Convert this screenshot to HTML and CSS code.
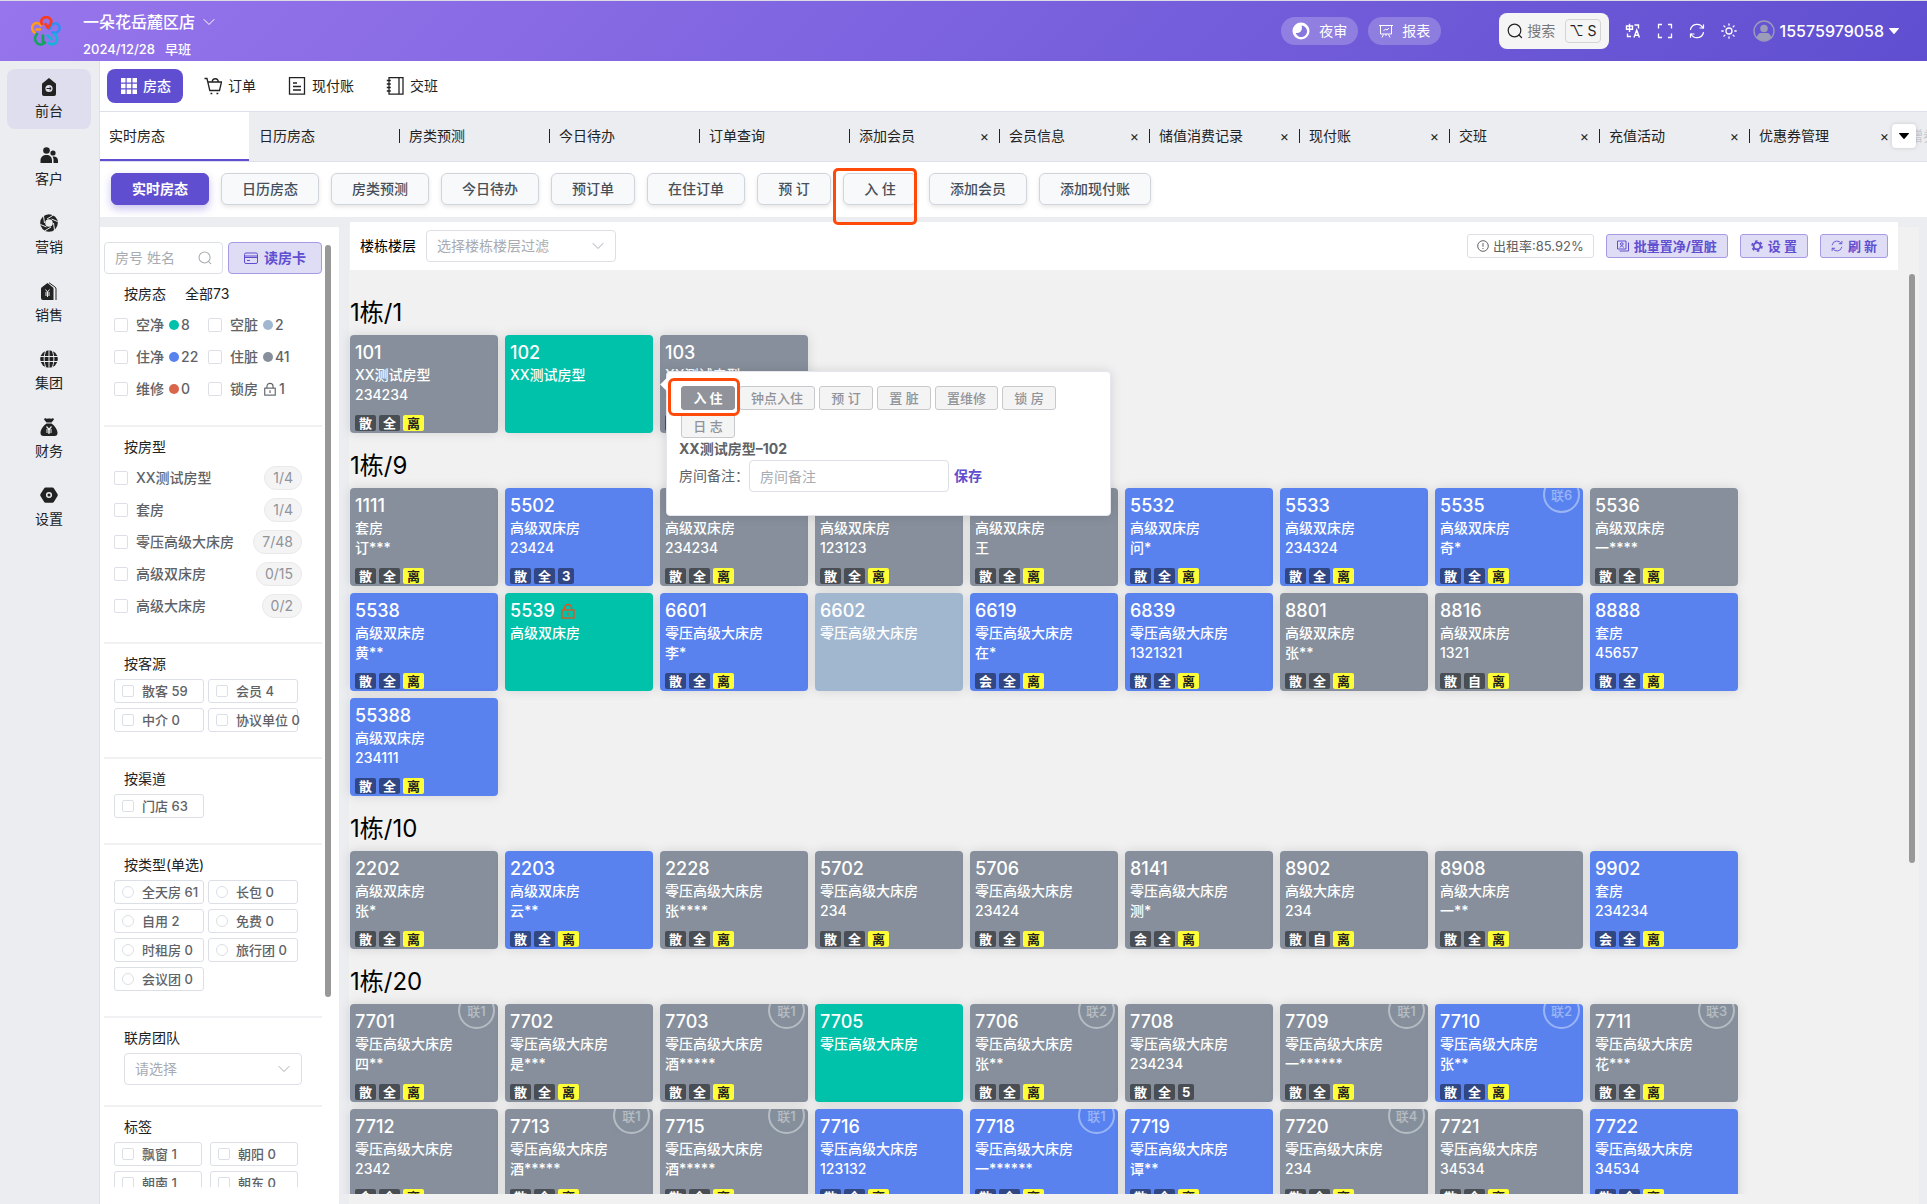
FILE: index.html
```html
<!DOCTYPE html>
<html lang="zh-CN">
<head>
<meta charset="utf-8">
<meta name="viewport" content="width=device-width, initial-scale=1">
<title>实时房态</title>
<link rel="stylesheet" href="styles.css">
</head>
<body>
<svg class="sprite" aria-hidden="true">
  <symbol id="chevron" viewBox="0 0 12 8"><path d="M1 1.5l5 5 5-5" fill="none" stroke="currentColor" stroke-linecap="round" stroke-linejoin="round"/></symbol>
  <symbol id="caret" viewBox="0 0 10 6"><path d="M.5 0h9c.5 0 .6.4.3.7L5.5 5.7a.7.7 0 0 1-1 0L.2.7C-.1.4 0 0 .5 0z" fill="currentColor"/></symbol>
  <symbol id="search" viewBox="0 0 16 16"><g fill="none" stroke="currentColor" stroke-width="1.200" stroke-linecap="round"><circle cx="7.5" cy="7.5" r="6.300"/><path d="M12 12l2.500 2.500"/></g></symbol>
  <symbol id="lock" viewBox="0 0 14 16"><g fill="none" stroke="currentColor" stroke-width="1.300"><rect x="1" y="7" width="12" height="8"/><path d="M3.500 7V5a3.500 3.500 0 0 1 7 0v2M7 9.500v3"/></g></symbol>
  <symbol id="refresh" viewBox="0 0 16 16"><g fill="none" stroke="currentColor" stroke-width="1.200" stroke-linecap="round" stroke-linejoin="round"><path d="M1.500 6.500A6.700 6.700 0 0 1 14 5M14.500 9.500A6.700 6.700 0 0 1 2 11"/><path d="M14.500 1.800V5H11M1.500 14.200V11H5"/></g></symbol>
</svg>

<header class="topbar">
  <svg class="logo" viewBox="0 0 30 30" fill="none" stroke-width="2.600" stroke-linecap="round" stroke-linejoin="round">
    <path stroke="#2f8ff5" d="M18.500 13l2-3.500c1.500-2 4-2.800 6-1.500 2.700 1.700 2.800 5.500.5 7.500-1.500 1.200-3.500 1.500-5.500 1"/>
    <path stroke="#12b5d6" d="M23.500 18c2.500 2.500 3.500 5.500 1.500 8.300-2 2.400-5.500 2.700-7.500.5M16.500 19.500c1 2.500 4 1.500 4 4"/>
    <path stroke="#10a558" d="M12 19.500V26M6 18c-2.500 2.500-2.500 6-.5 8.500 2.500 3 6.500 2.500 8.500 0"/>
    <path stroke="#ff9c1a" d="M3.500 16.500C.5 14 .5 10 3 8c2.500-1.700 5.500-1 7 1.500M9 13.500H5.500"/>
    <path stroke="#fb3b1e" d="M17 12l2.500-4c1.200-2 .8-4.200-.8-5.500-2-1.600-5-1.600-7 0-1.600 1.400-1.800 3.500-.7 5.500M17 12l-2.500-4"/>
  </svg>
  <div class="shop">
    <button class="shop-name" type="button">一朵花岳麓区店 <svg class="chev"><use href="#chevron"/></svg></button>
    <div class="shop-date"><span>2024/12/28</span><span>早班</span></div>
  </div>
  <div class="top-actions">
    <button class="pill" type="button"><svg class="i18" viewBox="0 0 18 18"><circle cx="9" cy="9" r="8.500" fill="#fff"/><path d="M9.500 3.500a5.800 5.800 0 1 1-5.800 7.500c3.800.8 7.500-2.500 5.800-7.500z" fill="#8577de"/></svg>夜审</button>
    <button class="pill" type="button"><svg class="i14" viewBox="0 0 14 14" fill="none" stroke="#fff"><path d="M0 1.500h14M1.500 1.500v8.500h11V1.500M4.500 7l2-2 1.500 1L10 4M4.500 10.500L3 13.500M9.500 10.500l1.500 3M7 10v2"/></svg>报表</button>
    <button class="search-box" type="button"><svg class="i16"><use href="#search"/></svg><span>搜索</span><kbd>⌥ S</kbd></button>
    <div class="tools">
      <button type="button" aria-label="语言"><svg class="i16" viewBox="0 0 16 16" fill="none" stroke="currentColor" stroke-width="1.400"><path d="M1.500 3h6v3.300h-6zM4.500.8V9M9.500 2h4v3.500M2.500 10.500v3H6M9 14.500l2.700-7.500 2.700 7.500M9.800 12.300h3.800"/></svg></button>
      <button type="button" aria-label="全屏"><svg class="i16" viewBox="0 0 16 16" fill="none" stroke="currentColor" stroke-width="1.300"><path d="M1.500 5.500v-4H5M11 1.500h3.500v4M14.500 10.500v4H11M5 14.500H1.500v-4"/></svg></button>
      <button type="button" aria-label="刷新页面"><svg class="i16"><use href="#refresh"/></svg></button>
      <button type="button" aria-label="主题"><svg class="i16" viewBox="0 0 16 16" fill="none" stroke="currentColor" stroke-width="1.300" stroke-linecap="round"><circle cx="8" cy="8" r="3"/><path d="M8 .8v1.400M8 13.800v1.400M.8 8h1.400M13.800 8h1.400M2.900 2.900l1 1M12.100 12.100l1 1M2.900 13.100l1-1M12.100 3.900l1-1"/></svg></button>
    </div>
    <button class="user" type="button"><svg class="avatar" viewBox="0 0 22 22"><circle cx="11" cy="11" r="10" fill="none" stroke="#9a9cb8" stroke-width="1.400"/><circle cx="11" cy="8.500" r="3.800" fill="#9a9cb8"/><path d="M4 18c0-3.500 2-5 4-5h6c2 0 4 1.500 4 5a10 10 0 0 1-14 0z" fill="#9a9cb8"/></svg>15575979058<svg class="caret"><use href="#caret"/></svg></button>
  </div>
</header>

<div class="shell">
  <nav class="sidebar" aria-label="主菜单">
    <a class="side-item active" href="#"><svg viewBox="0 0 18 18"><path d="M9 0l6.500 5.200c.5.4.5.800.5 1.300V16a2 2 0 0 1-2 2H4a2 2 0 0 1-2-2V6.500c0-.5 0-.9.5-1.300z" fill="#222"/><circle cx="9" cy="10.500" r="3.600" fill="#e0e0ee"/><path d="M6.500 10.500h4.500M9.500 9l1.700 1.500L9.500 12" stroke="#222" fill="none"/></svg>前台</a>
    <a class="side-item" href="#"><svg viewBox="0 0 18 18" fill="#222"><circle cx="6.500" cy="4.500" r="3.300"/><circle cx="13" cy="7" r="2.600"/><path d="M.5 17v-2.500C.5 11 3 9 6.500 9c3.300 0 5.500 2 5.500 5.500V17zM13.500 17v-3c0-1.500-.4-2.500-1-3.500 3-.5 5.500 1 5.500 4V17z"/></svg>客户</a>
    <a class="side-item" href="#"><svg viewBox="0 0 18 18"><circle cx="9" cy="9" r="6.300" fill="none" stroke="#222" stroke-width="5"/><path d="M7 5L13.500 1M11.500 5L17.500 7.500M13.500 9L14.500 16M11 13L4.500 17M6.500 13L.5 10.500M4.500 9L3.500 2" stroke="#ecedf1" fill="none"/></svg>营销</a>
    <a class="side-item" href="#"><svg viewBox="0 0 18 18"><path d="M7.500 1l5.500 4.500c.5.4.5 1 .5 1.500V18H3a2 2 0 0 1-2-2V7c0-.5 0-1 .5-1.500z" fill="#222"/><path d="M9 .7l6 4.300c.8.6 1 1 1 2v11" fill="none" stroke="#222"/><path d="M5.500 7.500l2 2.500 2-2.500M5 11h5M5 13h5M7.500 10v5" stroke="#ecedf1" fill="none"/></svg>销售</a>
    <a class="side-item" href="#"><svg viewBox="0 0 18 18"><circle cx="9" cy="9" r="8.800" fill="#222"/><path d="M0 6.500h18M0 11.500h18M9 0v18M6 .5c-2.500 5-2.500 12 0 17M12 .5c2.500 5 2.500 12 0 17" stroke="#ecedf1" fill="none"/></svg>集团</a>
    <a class="side-item" href="#"><svg viewBox="0 0 18 18"><path d="M5 0c1.500 1 2.500.5 4 .5S12 1 13 0l1 1.500-2.500 3h-5L4 1.500zM6.500 5.500h5C15 8 17.500 12 17.500 15c0 2-1 3-3 3h-11c-2 0-3-1-3-3 0-3 2.500-7 6-9.500z" fill="#222"/><path d="M6.500 8.500L9 11.500l2.500-3M6 12h6M6 14h6M9 11.500V16" stroke="#ecedf1" stroke-width="1.200" fill="none"/></svg>财务</a>
    <a class="side-item" href="#"><svg viewBox="0 0 18 18"><path d="M5.500 1.500h7c.6 0 1 .2 1.300.7L17.500 8c.4.600.4 1.300 0 2l-3.700 6c-.3.500-.7.700-1.300.7h-7c-.6 0-1-.2-1.300-.7L.5 10c-.4-.7-.4-1.400 0-2l3.700-5.800c.3-.5.7-.7 1.300-.7z" fill="#222"/><circle cx="9" cy="9" r="2.300" fill="none" stroke="#ecedf1" stroke-width="1.500"/></svg>设置</a>
  </nav>

  <div class="workspace">
    <nav class="subnav" aria-label="前台">
      <a class="sub-item active" href="#"><svg class="i16" viewBox="0 0 16 16" fill="currentColor"><path d="M0 0h4.500v4.500H0zM5.700 0h4.500v4.500H5.700zM11.500 0H16v4.500h-4.500zM0 5.700h4.500v4.500H0zM5.700 5.700h4.500v4.500H5.700zM11.500 5.700H16v4.500h-4.500zM0 11.500h4.500V16H0zM5.700 11.500h4.500V16H5.700zM11.500 11.500H16V16h-4.500z"/></svg>房态</a>
      <a class="sub-item" href="#"><svg class="i18" viewBox="0 0 18 18" fill="none" stroke="currentColor" stroke-width="1.300"><path d="M.5 1.500H3l2.800 12h9.700L17.500 5H4M8 5.500c.5-5 6-5 6.500 0"/><path d="M6.500 16.500h1.800M12.500 16.500h1.800"/></svg>订单</a>
      <a class="sub-item" href="#"><svg class="i18" viewBox="0 0 18 18" fill="none" stroke="currentColor" stroke-width="1.300"><path d="M1.500.700h15v16.500h-15zM5 6h4M5 9.500h8M5 13h8"/></svg>现付账</a>
      <a class="sub-item" href="#"><svg class="i18" viewBox="0 0 18 18" fill="none" stroke="currentColor" stroke-width="1.300"><path d="M3 .7h14v16.500H3zM13 .7v16.500M.8 3.500h4M.8 7h4M.8 10.500h4M.8 14h4"/></svg>交班</a>
    </nav>

    <div class="tabs">
      <div class="tab active"><a href="#">实时房态</a></div>
      <div class="tab plain"><a href="#">日历房态</a></div>
      <div class="tab"><a href="#">房类预测</a></div>
      <div class="tab"><a href="#">今日待办</a></div>
      <div class="tab"><a href="#">订单查询</a></div>
      <div class="tab"><a href="#">添加会员</a><button type="button">×</button></div>
      <div class="tab"><a href="#">会员信息</a><button type="button">×</button></div>
      <div class="tab"><a href="#">储值消费记录</a><button type="button">×</button></div>
      <div class="tab"><a href="#">现付账</a><button type="button">×</button></div>
      <div class="tab"><a href="#">交班</a><button type="button">×</button></div>
      <div class="tab"><a href="#">充值活动</a><button type="button">×</button></div>
      <div class="tab"><a href="#">优惠券管理</a><button type="button">×</button></div>
      <div class="tab faded"><a href="#">赠券</a></div>
      <button class="tabs-more" type="button" aria-label="更多标签"><svg class="caret"><use href="#caret"/></svg></button>
    </div>

    <div class="quick">
      <button class="quick-btn active" type="button">实时房态</button>
      <button class="quick-btn" type="button">日历房态</button>
      <button class="quick-btn" type="button">房类预测</button>
      <button class="quick-btn" type="button">今日待办</button>
      <button class="quick-btn" type="button">预订单</button>
      <button class="quick-btn" type="button">在住订单</button>
      <button class="quick-btn" type="button">预 订</button>
      <span class="marked marked-quick"><button class="quick-btn" type="button">入 住</button></span>
      <button class="quick-btn" type="button">添加会员</button>
      <button class="quick-btn" type="button">添加现付账</button>
    </div>

    <main class="content">
      <aside class="filters">
        <div class="filter-scroll">
          <div class="find">
            <label class="find-box"><input type="text" placeholder="房号 姓名" aria-label="房号 姓名"><svg class="i14"><use href="#search"/></svg></label>
            <button class="btn-soft read-card" type="button"><svg class="i14" viewBox="0 0 14 14" fill="none" stroke="currentColor"><rect x=".5" y="2" width="13" height="10.500" rx="1.500"/><path d="M.5 5h13M.5 6.500h13M3 9.500h3"/></svg>读房卡</button>
          </div>
          <section class="filter first">
            <h3>按房态<span>全部73</span></h3>
            <div class="states">
              <label><input type="checkbox">空净<i class="dot green"></i>8</label>
              <label><input type="checkbox">空脏<i class="dot pale"></i>2</label>
              <label><input type="checkbox">住净<i class="dot blue"></i>22</label>
              <label><input type="checkbox">住脏<i class="dot gray"></i>41</label>
              <label><input type="checkbox">维修<i class="dot red"></i>0</label>
              <label><input type="checkbox">锁房<svg class="lock-sm"><use href="#lock"/></svg>1</label>
            </div>
          </section>
          <section class="filter">
            <h3>按房型</h3>
            <div class="types">
              <label><input type="checkbox">XX测试房型<span class="count">1/4</span></label>
              <label><input type="checkbox">套房<span class="count">1/4</span></label>
              <label><input type="checkbox">零压高级大床房<span class="count">7/48</span></label>
              <label><input type="checkbox">高级双床房<span class="count">0/15</span></label>
              <label><input type="checkbox">高级大床房<span class="count">0/2</span></label>
            </div>
          </section>
          <section class="filter">
            <h3>按客源</h3>
            <div class="boxes">
              <label><input type="checkbox">散客 59</label>
              <label><input type="checkbox">会员 4</label>
              <label><input type="checkbox">中介 0</label>
              <label><input type="checkbox">协议单位 0</label>
            </div>
          </section>
          <section class="filter">
            <h3>按渠道</h3>
            <div class="boxes"><label><input type="checkbox">门店 63</label></div>
          </section>
          <section class="filter">
            <h3>按类型(单选)</h3>
            <div class="boxes">
              <label><input type="radio" name="kind">全天房 61</label>
              <label><input type="radio" name="kind">长包 0</label>
              <label><input type="radio" name="kind">自用 2</label>
              <label><input type="radio" name="kind">免费 0</label>
              <label><input type="radio" name="kind">时租房 0</label>
              <label><input type="radio" name="kind">旅行团 0</label>
              <label><input type="radio" name="kind">会议团 0</label>
            </div>
          </section>
          <section class="filter">
            <h3><label for="team">联房团队</label></h3>
            <div class="select team"><select id="team"><option>请选择</option></select><svg class="chev"><use href="#chevron"/></svg></div>
          </section>
          <section class="filter">
            <h3>标签</h3>
            <div class="boxes wide">
              <label><input type="checkbox">飘窗 1</label>
              <label><input type="checkbox">朝阳 0</label>
              <label><input type="checkbox">朝南 1</label>
              <label><input type="checkbox">朝东 0</label>
            </div>
          </section>
        </div>
        <div class="thumb"></div>
      </aside>

      <section class="board">
        <div class="board-bar">
          <label for="floor">楼栋楼层</label>
          <div class="select floor"><select id="floor"><option>选择楼栋楼层过滤</option></select><svg class="chev"><use href="#chevron"/></svg></div>
          <div class="board-actions">
            <span class="rate"><svg class="i12" viewBox="0 0 12 12" fill="none" stroke="currentColor"><circle cx="6" cy="6" r="5.300"/><path d="M6 3v3.800M6 8v1"/></svg>出租率:85.92%</span>
            <button class="btn-soft" type="button"><svg class="i12" viewBox="0 0 12 12" fill="none" stroke="currentColor"><path d="M.5 1h8.500v8H.5zM11.500 2.500v8.500H2.500M3 7.500c0-2 3.500-2 3.500 0"/><circle cx="4.800" cy="4" r="1.300"/></svg>批量置净/置脏</button>
            <button class="btn-soft" type="button"><svg class="i12" viewBox="0 0 12 12" fill="none" stroke="currentColor"><circle cx="6" cy="6" r="3.400" stroke-width="1.800"/><circle cx="6" cy="6" r="5" stroke-width="1.600" stroke-dasharray="2.600 2.636"/></svg>设 置</button>
            <button class="btn-soft" type="button"><svg class="i12"><use href="#refresh"/></svg>刷 新</button>
          </div>
        </div>
        <div class="board-scroll" id="board"></div>
        <div class="thumb"></div>
      </section>
    </main>
  </div>
</div>

<template id="room-menu">
  <div class="popover">
    <div class="pop-actions">
      <span class="marked marked-pop"><button class="pop-btn active" type="button">入 住</button></span>
      <button class="pop-btn" type="button">钟点入住</button>
      <button class="pop-btn" type="button">预 订</button>
      <button class="pop-btn" type="button">置 脏</button>
      <button class="pop-btn" type="button">置维修</button>
      <button class="pop-btn" type="button">锁 房</button>
      <button class="pop-btn" type="button">日 志</button>
    </div>
    <div class="pop-title">XX测试房型–102</div>
    <div class="pop-note">
      <label for="note">房间备注：</label>
      <input id="note" type="text" placeholder="房间备注">
      <button type="button">保存</button>
    </div>
  </div>
</template>
<script src="app.js"></script>
</body>
</html>
```
FILE: styles.css
```css
* { box-sizing: border-box; }

html, body { height: 100%; }

body {
  margin: 0;
  display: flex;
  flex-direction: column;
  overflow: hidden;
  background: #ecedf1;
  color: #222;
  font: 14px/20px Inter, "Noto Sans CJK SC", sans-serif;
}

button, input, select { font: inherit; color: inherit; }
button { padding: 0; border: 0; background: none; white-space: nowrap; cursor: pointer; }
a { color: inherit; text-decoration: none; }
h2, h3 { margin: 0; font-weight: 400; }
svg { flex: none; display: block; }
input::placeholder { color: #a8abb2; opacity: 1; }

.sprite { position: absolute; width: 0; height: 0; }
.i12 { width: 12px; height: 12px; }
.i14 { width: 14px; height: 14px; }
.i16 { width: 16px; height: 16px; }
.i18 { width: 18px; height: 18px; }
.chev { width: 12px; height: 8px; }
.caret { width: 10px; height: 6px; }

/* top bar */
.topbar {
  flex: none;
  display: flex;
  align-items: center;
  height: 61px;
  padding: 0 28px 0 31px;
  border-top: 1px solid #dcdce4;
  background: linear-gradient(135deg, #9775ec, #5f4fd0);
  color: #fff;
}
.logo { width: 30px; height: 30px; }
.shop { display: flex; flex-direction: column; gap: 7px; margin-left: 22px; padding-top: 9px; }
.shop-name { display: flex; align-items: center; gap: 8px; font-size: 16px; font-weight: 500; }
.shop-date { display: flex; gap: 10px; font-size: 13px; font-weight: 500; }
.top-actions { display: flex; align-items: center; margin-left: auto; }
.pill {
  display: flex;
  align-items: center;
  gap: 9px;
  height: 28px;
  margin-right: 10px;
  padding: 0 11px;
  border-radius: 14px;
  background: rgba(255, 255, 255, .22);
}
.search-box {
  display: flex;
  align-items: center;
  height: 36px;
  margin: 0 16px 0 48px;
  padding: 0 8px;
  border-radius: 8px;
  background: #f5f5f5;
  color: #222;
}
.search-box span { margin: 0 10px 0 4px; color: #777; }
.search-box kbd {
  height: 24px;
  padding: 0 3px;
  border: 1px solid #d4d4d4;
  border-radius: 4px;
  font: 14px/22px Inter, "DejaVu Sans", sans-serif;
}
.tools { display: flex; gap: 16px; }
.user { display: flex; align-items: center; gap: 5px; margin-left: 16px; font-size: 16px; font-weight: 500; }
.avatar { width: 22px; height: 22px; }

/* side menu */
.shell { flex: 1; display: flex; min-height: 0; }
.sidebar {
  flex: none;
  display: flex;
  flex-direction: column;
  gap: 8px;
  width: 100px;
  padding: 8px 8px 0 7px;
  border-right: 1px solid #dfe0e8;
}
.side-item {
  display: flex;
  flex-direction: column;
  align-items: center;
  gap: 5px;
  height: 60px;
  padding-top: 9px;
  border-radius: 8px;
}
.side-item svg { width: 18px; height: 18px; }
.side-item.active { background: #dfdeee; }

.workspace { flex: 1; display: flex; flex-direction: column; min-width: 0; }
.subnav {
  flex: none;
  display: flex;
  gap: 10px;
  height: 51px;
  padding: 8px 7px;
  border-bottom: 1px solid #dde0ea;
  background: #fff;
}
.sub-item { display: flex; align-items: center; gap: 6px; height: 34px; padding: 0 11px; }
.sub-item.active { padding: 0 12px 0 14px; border-radius: 8px; background: #5f4fd0; color: #fff; font-weight: 500; }

/* opened pages */
.tabs {
  flex: none;
  display: flex;
  position: relative;
  height: 50px;
  border-bottom: 1px solid #dde0ea;
  overflow: hidden;
}
.tab {
  flex: none;
  display: flex;
  align-items: center;
  justify-content: space-between;
  width: 150px;
  padding: 0 10px 2px 0;
}
.tab::before { content: ""; width: 1px; height: 14px; margin-right: 9px; background: #222; }
.tab a { flex: 1; }
.tab.active { width: 149px; padding-bottom: 0; border-bottom: 2px solid #5f4fd0; background: #fff; }
.tab.active::before, .tab.plain::before { background: none; }
.tab.active::before { margin-right: 8px; }
.tab.faded { color: #c8c9ce; }
.tabs-more {
  position: absolute;
  top: 12px;
  right: 11px;
  display: grid;
  place-items: center;
  width: 24px;
  height: 24px;
  border-radius: 4px;
  background: #fff;
  box-shadow: 0 0 4px rgba(0, 0, 0, .15);
  color: #000;
}

/* shortcut buttons */
.quick { flex: none; display: flex; gap: 12px; height: 55px; padding: 11px; background: #fff; }
.quick-btn {
  min-width: 74px;
  height: 32px;
  padding: 0 20px;
  border: 1px solid #d0d5dc;
  border-radius: 6px;
  background: #f8f9fb;
  box-shadow: 0 2px 4px rgba(0, 0, 0, .1);
  color: #475059;
  font-weight: 500;
}
.quick-btn.active {
  border-color: #5f4fd0;
  background: #5f4fd0;
  box-shadow: 0 4px 8px rgba(95, 79, 208, .35);
  color: #fff;
  font-weight: 700;
}
.marked { position: relative; z-index: 1; }
.marked::after {
  content: "";
  position: absolute;
  border: 3px solid #ff4a0a;
  border-radius: 5px;
  pointer-events: none;
}
.marked-quick::after { inset: -5px 0 -19px -10px; }
.marked-pop::after { inset: -8px -5px -6px -13px; border-radius: 6px; }

/* filter column */
.content { flex: 1; display: flex; gap: 10px; min-height: 0; }
.filters {
  flex: none;
  position: relative;
  width: 239px;
  margin-top: 10px;
  padding: 15px 17px 17px 4px;
  background: #fff;
}
.filter-scroll { height: 100%; overflow: hidden; }
.thumb { position: absolute; width: 6px; border-radius: 3px; background: #989898; }
.filters .thumb { top: 18px; right: 8px; height: 77%; }
.find { display: flex; gap: 5px; height: 32px; margin-bottom: 5px; }
.find-box {
  flex: 1;
  display: flex;
  align-items: center;
  min-width: 0;
  padding: 0 10px;
  border: 1px solid #dcdfe6;
  border-radius: 4px;
  color: #a8abb2;
}
.find-box input { flex: 1; min-width: 0; padding: 0; border: 0; outline: 0; background: none; }
.btn-soft {
  display: flex;
  align-items: center;
  gap: 5px;
  height: 24px;
  padding: 0 10px;
  border: 1px solid #a59ae6;
  border-radius: 3px;
  background: #dfdcf6;
  color: #5f4fd0;
  font-size: 13px;
  font-weight: 700;
}
.read-card { height: 32px; padding: 0 15px; gap: 6px; border-radius: 4px; font-size: 14px; }

.filter { padding-top: 5px; margin-bottom: 20px; border-top: 2px solid #f1f1f3; }
.filter.first { padding-top: 0; border-top: 0; }
.filter h3 { padding-left: 20px; font-size: 14px; line-height: 30px; }
.filter h3 span { margin-left: 19px; }
.filter input {
  flex: none;
  appearance: none;
  width: 14px;
  height: 14px;
  margin: 0 8px 0 0;
  border: 1px solid #dcdfe6;
  border-radius: 2px;
  background: #fff;
}
.filter input[type="radio"] { border-radius: 50%; }
.states, .types, .boxes { padding-left: 10px; color: #606266; font-weight: 500; }
.states { display: grid; grid-template-columns: 94px 1fr; }
.states label, .types label { display: flex; align-items: center; height: 32px; }
.dot { width: 10px; height: 10px; margin: 0 2px 0 5px; border-radius: 50%; }
.green { background: #00c1a9; }
.pale { background: #a1b7d0; }
.blue { background: #5982ef; }
.gray { background: #868f9b; }
.red { background: #d9654b; }
.lock-sm { width: 14px; height: 14px; margin: 0 2px 0 5px; }
.types { padding-right: 20px; }
.count {
  margin-left: auto;
  padding: 0 8px;
  border: 1px solid #e9e9eb;
  border-radius: 12px;
  background: #f4f4f5;
  color: #909399;
  font-weight: 400;
  line-height: 22px;
}
.boxes { display: grid; grid-template-columns: 90px 90px; column-gap: 4px; }
.boxes.wide { grid-template-columns: 88px 88px; column-gap: 8px; }
.boxes label {
  display: flex;
  align-items: center;
  height: 24px;
  margin-bottom: 5px;
  padding-left: 7px;
  border: 1px solid #dcdfe6;
  border-radius: 3px;
  font-size: 13px;
  white-space: nowrap;
}
.boxes input { width: 12px; height: 12px; }
.select { position: relative; color: #a8abb2; }
.select select {
  appearance: none;
  width: 100%;
  height: 32px;
  padding: 0 10px;
  border: 1px solid #dcdfe6;
  border-radius: 4px;
  background: #fff;
}
.select .chev { position: absolute; top: 12px; right: 12px; pointer-events: none; }
.team { margin: 0 20px; }

/* room board */
.board {
  flex: 1;
  display: flex;
  flex-direction: column;
  position: relative;
  min-width: 0;
  margin: 5px 8px 0 0;
  padding: 0 0 10px 1px;
  background: linear-gradient(#f1f1f1, #f1f1f1) no-repeat 0 5px;
}
.board-bar {
  flex: none;
  display: flex;
  align-items: center;
  height: 48px;
  margin-right: 21px;
  padding: 0 10px;
  background: #fff;
  color: #000;
}
.floor { width: 190px; margin-left: 10px; }
.board-actions { display: flex; gap: 12px; margin-left: auto; }
.rate {
  display: flex;
  align-items: center;
  gap: 4px;
  height: 24px;
  padding: 0 9px;
  border: 1px solid #dcdfe6;
  border-radius: 3px;
  color: #606266;
  font-size: 13px;
}
.board-scroll { flex: 1; min-height: 0; padding: 20px 60px 0 12px; margin-left: -12px; overflow: hidden; }
.board .thumb { top: 52px; right: 4px; height: 60%; }
.floor-group { margin-bottom: 10px; }
.floor-group h2 { color: #000; font-size: 24px; line-height: 45px; }
.rooms {
  display: grid;
  grid-template-columns: repeat(auto-fill, 148px);
  gap: 7px;
  margin: 0;
  padding: 0;
  list-style: none;
}
.rooms li { position: relative; border-radius: 4px; box-shadow: 0 0 12px rgba(0, 0, 0, .12); }
.room {
  position: relative;
  display: flex;
  flex-direction: column;
  height: 98px;
  padding: 7px 5px 2px;
  border-radius: 4px;
  overflow: hidden;
  color: #fff;
  font-weight: 500;
}
.room-no { display: flex; align-items: center; gap: 6px; height: 22px; margin-bottom: 1px; font-size: 18px; }
.room-no svg { width: 14px; height: 16px; color: #e8501c; }
.room-tags { display: flex; gap: 3px; margin-top: auto; }
.tag {
  padding: 0 4px;
  border-radius: 2px;
  background: rgba(0, 0, 0, .45);
  font-size: 13px;
  font-weight: 700;
  line-height: 16px;
}
.tag.leave { background: #ffff37; color: #222; }
.link {
  position: absolute;
  top: -12px;
  right: 3px;
  width: 37px;
  height: 37px;
  border: 2px solid;
  border-radius: 50%;
  opacity: .4;
  font-size: 13px;
  line-height: 35px;
  text-align: center;
}

/* room menu */
.popover {
  position: absolute;
  z-index: 2;
  top: 36px;
  left: 161px;
  width: 445px;
  height: 145px;
  padding: 14px 12px;
  border: 1px solid #e4e7ed;
  border-radius: 4px;
  background: #fff;
  box-shadow: 0 0 12px rgba(0, 0, 0, .12);
  color: #606266;
}
.popover::before {
  content: "";
  position: absolute;
  top: 8px;
  left: -5px;
  width: 9px;
  height: 9px;
  background: #fff;
  transform: rotate(45deg);
}
.pop-actions { display: flex; flex-wrap: wrap; gap: 4px; padding: 0 2px; }
.pop-btn {
  min-width: 54px;
  height: 24px;
  padding: 0 11px;
  border: 1px solid #c8c9cc;
  border-radius: 3px;
  background: #f4f4f5;
  color: #909399;
  font-size: 13px;
  font-weight: 500;
}
.pop-btn.active { border-color: #909399; background: #909399; color: #fff; font-weight: 700; }
.pop-title { line-height: 22px; font-weight: 700; }
.pop-note { display: flex; align-items: center; gap: 5px; white-space: nowrap; }
.pop-note label { width: 65px; }
.pop-note input { width: 200px; height: 32px; padding: 0 10px; border: 1px solid #dcdfe6; border-radius: 4px; }
.pop-note button { color: #5f4fd0; font-weight: 700; }
```
FILE: app.js
```js
// Each room: number, state, room type, guest, tags, linked-group number.
const A = 'XX测试房型', T = '套房', S = '高级双床房', D = '高级大床房', Z = '零压高级大床房';

const floors = [
  ['1栋/1', [
    ['101', 'gray', A, '234234', '散全离'],
    ['102', 'green', A, '', '', 0, 'menu'],
    ['103', 'gray', A, '234', '散全离'],
  ]],
  ['1栋/9', [
    ['1111', 'gray', T, '订***', '散全离'],
    ['5502', 'blue', S, '23424', '散全3'],
    ['5503', 'gray', S, '234234', '散全离'],
    ['5505', 'gray', S, '123123', '散全离'],
    ['5531', 'gray', S, '王', '散全离'],
    ['5532', 'blue', S, '问*', '散全离'],
    ['5533', 'blue', S, '234324', '散全离'],
    ['5535', 'blue', S, '奇*', '散全离', 6],
    ['5536', 'gray', S, '一****', '散全离'],
    ['5538', 'blue', S, '黄**', '散全离'],
    ['5539', 'green', S, '', '', 0, 'lock'],
    ['6601', 'blue', Z, '李*', '散全离'],
    ['6602', 'pale', Z, '', ''],
    ['6619', 'blue', Z, '在*', '会全离'],
    ['6839', 'blue', Z, '1321321', '散全离'],
    ['8801', 'gray', S, '张**', '散全离'],
    ['8816', 'gray', S, '1321', '散自离'],
    ['8888', 'blue', T, '45657', '散全离'],
    ['55388', 'blue', S, '234111', '散全离'],
  ]],
  ['1栋/10', [
    ['2202', 'gray', S, '张*', '散全离'],
    ['2203', 'blue', S, '云**', '散全离'],
    ['2228', 'gray', Z, '张****', '散全离'],
    ['5702', 'gray', Z, '234', '散全离'],
    ['5706', 'gray', Z, '23424', '散全离'],
    ['8141', 'gray', Z, '测*', '会全离'],
    ['8902', 'gray', D, '234', '散自离'],
    ['8908', 'gray', D, '一**', '散全离'],
    ['9902', 'blue', T, '234234', '会全离'],
  ]],
  ['1栋/20', [
    ['7701', 'gray', Z, '四**', '散全离', 1],
    ['7702', 'gray', Z, '是***', '散全离'],
    ['7703', 'gray', Z, '酒*****', '散全离', 1],
    ['7705', 'green', Z, '', ''],
    ['7706', 'gray', Z, '张**', '散全离', 2],
    ['7708', 'gray', Z, '234234', '散全5'],
    ['7709', 'gray', Z, '一******', '散全离', 1],
    ['7710', 'blue', Z, '张**', '散全离', 2],
    ['7711', 'gray', Z, '花***', '散全离', 3],
    ['7712', 'gray', Z, '2342', '会全离'],
    ['7713', 'gray', Z, '酒*****', '散全离', 1],
    ['7715', 'gray', Z, '酒*****', '散全离', 1],
    ['7716', 'blue', Z, '123132', '散全离'],
    ['7718', 'blue', Z, '一******', '散全离', 1],
    ['7719', 'blue', Z, '谭**', '散全离'],
    ['7720', 'gray', Z, '234', '散全离', 4],
    ['7721', 'gray', Z, '34534', '散全离'],
    ['7722', 'blue', Z, '34534', '散全离'],
  ]],
];

const tag = (t) => `<span class="tag${t === '离' ? ' leave' : ''}">${t}</span>`;

const room = ([no, state, type, guest, tags, link, extra]) => `
  <li${extra === 'menu' ? ' class="has-menu"' : ''}>
    <div class="room ${state}">
      <div class="room-no">${no}${extra === 'lock' ? '<svg><use href="#lock"/></svg>' : ''}</div>
      <div>${type}</div>
      <div>${guest}</div>
      <div class="room-tags">${[...tags].map(tag).join('')}</div>
      ${link ? `<span class="link">联${link}</span>` : ''}
    </div>
  </li>`;

document.getElementById('board').innerHTML = floors.map(([name, rooms]) => `
  <section class="floor-group">
    <h2>${name}</h2>
    <ul class="rooms">${rooms.map(room).join('')}</ul>
  </section>`).join('');

const host = document.querySelector('.has-menu');
host.style.zIndex = 3;
host.append(document.getElementById('room-menu').content.cloneNode(true));
```
